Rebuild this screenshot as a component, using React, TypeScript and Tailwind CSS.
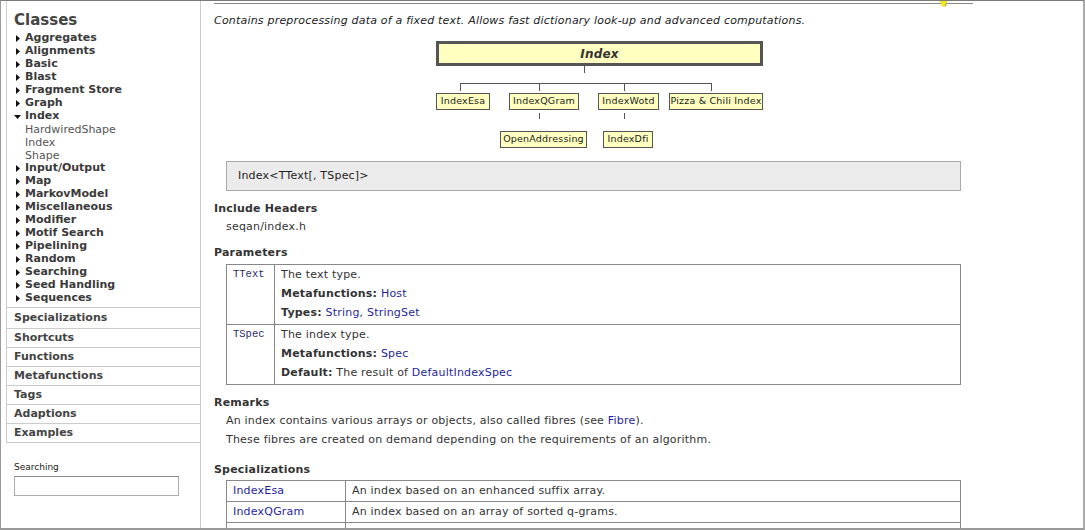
const link = "text-[#1f1f9c]";

const groups: { label: string; open?: boolean; children?: string[] }[] = [
  { label: "Aggregates" },
  { label: "Alignments" },
  { label: "Basic" },
  { label: "Blast" },
  { label: "Fragment Store" },
  { label: "Graph" },
  { label: "Index", open: true, children: ["HardwiredShape", "Index", "Shape"] },
  { label: "Input/Output" },
  { label: "Map" },
  { label: "MarkovModel" },
  { label: "Miscellaneous" },
  { label: "Modifier" },
  { label: "Motif Search" },
  { label: "Pipelining" },
  { label: "Random" },
  { label: "Searching" },
  { label: "Seed Handling" },
  { label: "Sequences" },
];

const sections = ["Shortcuts", "Functions", "Metafunctions", "Tags", "Adaptions", "Examples"];

const specs = [
  ["IndexEsa", "An index based on an enhanced suffix array."],
  ["IndexQGram", "An index based on an array of sorted q-grams."],
  ["IndexWotd", "An index based on a lazy suffix tree (see Giegerich et al., \"Efficient implementation of lazy suffix trees\")."],
];

function Arrow({ open }: { open?: boolean }) {
  if (open) {
    return (
      <svg width="7" height="4" viewBox="0 0 7 4">
        <path d="M0 0H7L3.5 4Z" fill="#111" />
      </svg>
    );
  }
  return (
    <svg width="4" height="7" viewBox="0 0 4 7">
      <path d="M0 0L4 3.5L0 7Z" fill="#111" />
    </svg>
  );
}

function Node({ label, className }: { label: string; className: string }) {
  return (
    <div
      className={`absolute h-[17px] border border-[#555] bg-[#ffffc0] flex items-center justify-center text-[9.5px] text-[#222] ${className}`}
    >
      {label}
    </div>
  );
}

function Sidebar() {
  return (
    <aside className="w-[200px] h-full pl-[5px] shrink-0">
      <div className="h-full border-r border-[#ccc] flex flex-col">
        <nav className="border-l border-b border-[#ccc]">
          <div className="pl-[7px] pt-[10px] pb-[3px] text-[15px] leading-[18px] font-bold text-[#444]">Classes</div>
          <div className="pb-[2px]">
            {groups.map((g) => (
              <div key={g.label}>
                <div className="flex items-center h-[13px] text-[11px] font-bold text-[#3a3a3a]">
                  <span className={`w-[18px] flex justify-end ${g.open ? "pr-[4px]" : "pr-[5px]"}`}>
                    <Arrow open={g.open} />
                  </span>
                  {g.label}
                </div>
                {g.children?.map((c) => (
                  <div key={c} className="pl-[18px] h-[13px] leading-[13px] text-[11px] text-[#555]">
                    {c}
                  </div>
                ))}
              </div>
            ))}
          </div>
          <div className="border-t border-[#ccc] h-[21px] pl-[7px] pt-px flex items-center text-[11px] font-bold text-[#444]">
            Specializations
          </div>
          {sections.map((s) => (
            <div key={s} className="border-t border-[#ccc] h-[19px] pl-[7px] flex items-center text-[11px] font-bold text-[#444]">
              {s}
            </div>
          ))}
        </nav>
        <div className="pl-[8px] pt-[18px]">
          <div className="text-[9px] leading-[12px] text-[#222]">Searching</div>
          <div className="mt-[3px] w-[165px] h-[20px] border border-[#aaa] border-t-[#888] bg-white" />
        </div>
      </div>
    </aside>
  );
}

function Diagram() {
  return (
    <div className="relative h-[124px]">
      <div className="absolute left-[222px] top-[4px] w-[327px] h-[25px] border-[3px] border-[#555] bg-[#ffffc0] flex items-center justify-center text-[12px] font-bold italic text-[#333]">
        Index
      </div>
      <div className="absolute left-[370px] top-[29px] w-px h-[7px] bg-[#555]" />
      <div className="absolute left-[246px] top-[46px] w-[252px] h-px bg-[#555]" />
      <div className="absolute left-[246px] top-[46px] w-px h-[8px] bg-[#555]" />
      <div className="absolute left-[325px] top-[46px] w-px h-[8px] bg-[#555]" />
      <div className="absolute left-[410px] top-[46px] w-px h-[8px] bg-[#555]" />
      <div className="absolute left-[497px] top-[46px] w-px h-[8px] bg-[#555]" />
      <Node label="IndexEsa" className="left-[222px] top-[56px] w-[54px]" />
      <Node label="IndexQGram" className="left-[295px] top-[56px] w-[70px]" />
      <Node label="IndexWotd" className="left-[384px] top-[56px] w-[61px]" />
      <Node label="Pizza & Chili Index" className="left-[455px] top-[56px] w-[94px]" />
      <div className="absolute left-[325px] top-[76px] w-px h-[6px] bg-[#555]" />
      <div className="absolute left-[410px] top-[76px] w-px h-[6px] bg-[#555]" />
      <Node label="OpenAddressing" className="left-[286px] top-[94px] w-[87px]" />
      <Node label="IndexDfi" className="left-[389px] top-[94px] w-[50px]" />
    </div>
  );
}

function Content() {
  return (
    <main className="w-[772px] pl-[13px] pt-[2px] shrink-0 text-[11px] tracking-[0.2px]">
      <div className="h-px bg-[#8a8a8a]" />
      <p className="h-[33px] pt-[10px] leading-[14px] italic text-[#222]">
        Contains preprocessing data of a fixed text. Allows fast dictionary look-up and advanced computations.
      </p>
      <Diagram />
      <div className="mx-3 h-[30px] border border-[#aaa] bg-[#ebebeb] flex items-center pl-[11px] text-[#222]">
        Index&lt;TText[, TSpec]&gt;
      </div>

      <h3 className="mt-[10px] leading-[16px] font-bold">Include Headers</h3>
      <div className="mt-[2px] leading-[16px] pl-[12px]">seqan/index.h</div>

      <h3 className="mt-[10px] leading-[16px] font-bold">Parameters</h3>
      <div className="mt-[3px] mx-3 border border-[#888]">
        <div className="flex">
          <div className="w-[48px] border-r border-[#888] pl-[6px] leading-[19px] font-['Liberation_Mono',monospace] text-[10.5px] tracking-normal text-[#2b2b6b]">
            TText
          </div>
          <div className="pl-[6px] pb-[2px] leading-[19px]">
            <div>The text type.</div>
            <div>
              <b>Metafunctions:</b> <span className={link}>Host</span>
            </div>
            <div>
              <b>Types:</b> <span className={link}>String</span>, <span className={link}>StringSet</span>
            </div>
          </div>
        </div>
        <div className="flex border-t border-[#888]">
          <div className="w-[48px] border-r border-[#888] pl-[6px] leading-[19px] font-['Liberation_Mono',monospace] text-[10.5px] tracking-normal text-[#2b2b6b]">
            TSpec
          </div>
          <div className="pl-[6px] pb-[2px] leading-[19px]">
            <div>The index type.</div>
            <div>
              <b>Metafunctions:</b> <span className={link}>Spec</span>
            </div>
            <div>
              <b>Default:</b> The result of <span className={link}>DefaultIndexSpec</span>
            </div>
          </div>
        </div>
      </div>

      <h3 className="mt-[10px] leading-[16px] font-bold">Remarks</h3>
      <div className="pl-[12px] leading-[19px]">
        <div>
          An index contains various arrays or objects, also called fibres (see <span className={link}>Fibre</span>).
        </div>
        <div>These fibres are created on demand depending on the requirements of an algorithm.</div>
      </div>

      <h3 className="mt-[13px] leading-[16px] font-bold">Specializations</h3>
      <div className="mt-[2px] mx-3 border-t border-x border-[#888]">
        {specs.map(([name, desc]) => (
          <div key={name} className="flex h-[21px] border-b border-[#888]">
            <div className={`w-[119px] shrink-0 border-r border-[#888] pl-[6px] flex items-center ${link}`}>{name}</div>
            <div className="pl-[6px] flex items-center whitespace-nowrap overflow-hidden">{desc}</div>
          </div>
        ))}
      </div>
    </main>
  );
}

export default function App() {
  return (
    <div className="relative w-[1085px] h-[530px] overflow-hidden bg-white border-t border-l border-r-2 border-b-2 border-t-[#7a7a7a] border-l-[#999] border-r-[#aaa] border-b-[#999] font-['DejaVu_Sans',Verdana,sans-serif] text-[#333]">
      <div className="flex h-full">
        <Sidebar />
        <Content />
      </div>
      <svg className="absolute left-[936px] top-[-1px]" width="13" height="7" viewBox="0 0 13 7">
        <path d="M1 0H12L9 3.5L8.5 6.5H4.5L4 3.5Z" fill="#f2e81c" />
        <path d="M1 0.5H12" stroke="#555" strokeWidth="1" />
        <path d="M9 3.5L8.5 6.5" stroke="#777" strokeWidth="0.8" />
      </svg>
    </div>
  );
}
